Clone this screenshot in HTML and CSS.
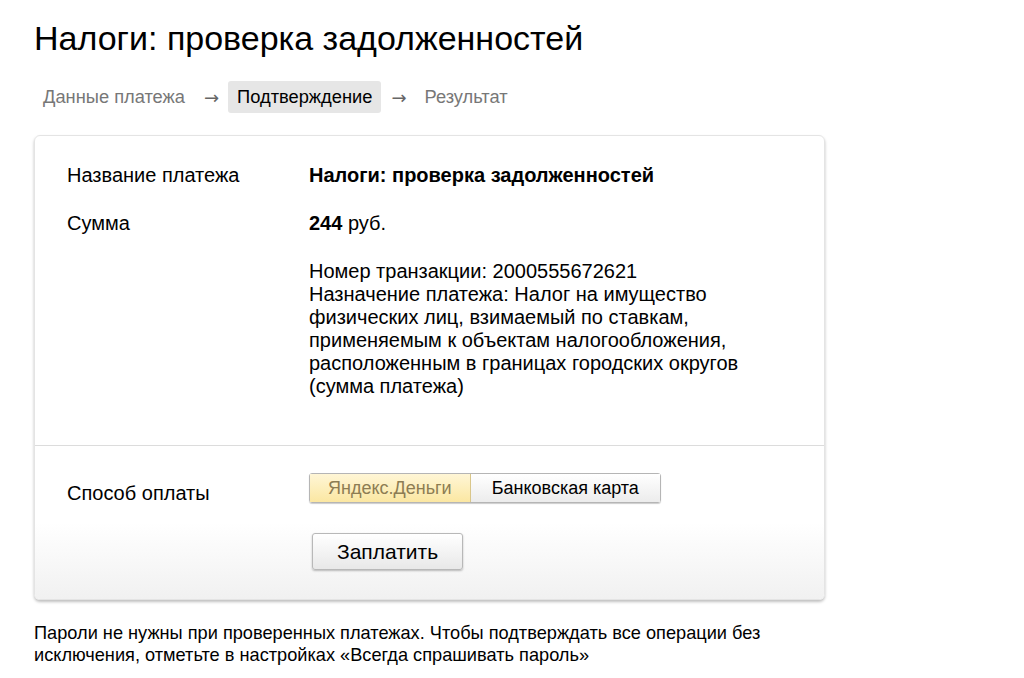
FILE: index.html
```html
<!DOCTYPE html>
<html lang="ru">

<head>
    <meta charset="UTF-8">
    <title>Налоги: проверка задолженностей</title>
    <link rel="stylesheet" href="styles.css">
</head>

<body>
    <div class="page">
        <h1 class="page-title">Налоги: проверка задолженностей</h1>

        <div class="steps">
            <span class="step">Данные платежа</span>
            <span class="step-arrow">&rarr;</span>
            <span class="step step-active">Подтверждение</span>
            <span class="step-arrow">&rarr;</span>
            <span class="step">Результат</span>
        </div>

        <div class="card">
            <div class="card-main">
                <div class="row">
                    <div class="row-label">Название платежа</div>
                    <div class="row-value"><b>Налоги: проверка задолженностей</b></div>
                </div>
                <div class="row">
                    <div class="row-label">Сумма</div>
                    <div class="row-value"><b>244</b> руб.</div>
                </div>
                <div class="row">
                    <div class="row-label"></div>
                    <div class="row-value details">
                        Номер транзакции: 2000555672621<br>
                        Назначение платежа: Налог на имущество физических лиц, взимаемый по ставкам, применяемым к объектам налогообложения, расположенным в границах городских округов (сумма платежа)
                    </div>
                </div>
            </div>

            <div class="card-footer">
                <div class="row row-pay">
                    <div class="row-label">Способ оплаты</div>
                    <div class="row-value">
                        <div class="tabs">
                            <span class="tab tab-active">Яндекс.Деньги</span>
                            <span class="tab">Банковская карта</span>
                        </div>
                    </div>
                </div>
                <div class="row">
                    <div class="row-label"></div>
                    <div class="row-value">
                        <button type="button" class="pay-btn">Заплатить</button>
                    </div>
                </div>
            </div>
        </div>

        <p class="note">Пароли не нужны при проверенных платежах. Чтобы подтверждать все операции без исключения, отметьте в настройках «Всегда спрашивать пароль»</p>
    </div>
</body>

</html>
```

FILE: styles.css
```css
body {
    margin: 0;
    font-family: "Liberation Sans", Arial, sans-serif;
    color: #000;
    background-color: #fff;
}

.page {
    padding: 18px 0 0 34px;
    width: 791px;
}

.page-title {
    margin: 0;
    font-size: 34px;
    font-weight: normal;
    line-height: 40px;
}

.steps {
    display: flex;
    align-items: center;
    margin-top: 23px;
    font-size: 18.3px;
    color: #777;
}

.step {
    padding: 5px 9px;
    border-radius: 3px;
}

.step-arrow {
    padding: 0 9px 0 10px;
    font-family: "DejaVu Sans", sans-serif;
    font-size: 18px;
    color: #666;
}

.step-active {
    background-color: #e6e6e6;
    color: #000;
}

.card {
    margin-top: 22px;
    border: 1px solid #e4e4e4;
    border-radius: 6px;
    box-shadow: 0 2px 3px rgba(0, 0, 0, 0.25);
    overflow: hidden;
}

.card-main {
    padding: 28px 0 47px 32px;
    border-bottom: 1px solid #dcdcdc;
}

.card-footer {
    padding: 27px 0 29px 32px;
    background: linear-gradient(to bottom, #fff, #fff 50%, #f1f1f1);
}

.row {
    display: flex;
    font-size: 20px;
    line-height: 23px;
    margin-bottom: 25px;
}

.row:last-child {
    margin-bottom: 0;
}

.row-label {
    width: 242px;
    flex-shrink: 0;
}

.row-value {
    width: 460px;
}

.row-pay {
    margin-bottom: 28px;
}

.row-pay .row-label {
    padding-top: 9px;
}

.tabs {
    display: inline-flex;
    border: 1px solid #b5b5b5;
    border-radius: 3px;
    box-shadow: 0 1px 1px rgba(0, 0, 0, 0.2);
    font-size: 18px;
    line-height: 21px;
}

.tab {
    padding: 4px 21px 3px 21px;
    background: linear-gradient(to bottom, #fff, #ececec);
}

.tab-active {
    padding: 4px 18px 3px 18px;
    background: linear-gradient(to bottom, #fff6d6, #fbe7a2);
    color: #8d7d53;
    border-right: 1px solid #d9c68a;
}

.pay-btn {
    margin-left: 3px;
    padding: 7px 24px 6px;
    font-family: "Liberation Sans", Arial, sans-serif;
    font-size: 21px;
    line-height: 22px;
    color: #000;
    border: 1px solid #b8b8b8;
    border-radius: 3px;
    background: linear-gradient(to bottom, #fff, #e8e8e8);
    box-shadow: 0 1px 2px rgba(0, 0, 0, 0.25);
}

.note {
    margin: 22px 0 0;
    font-size: 18.2px;
    line-height: 22px;
    width: 760px;
}
```
